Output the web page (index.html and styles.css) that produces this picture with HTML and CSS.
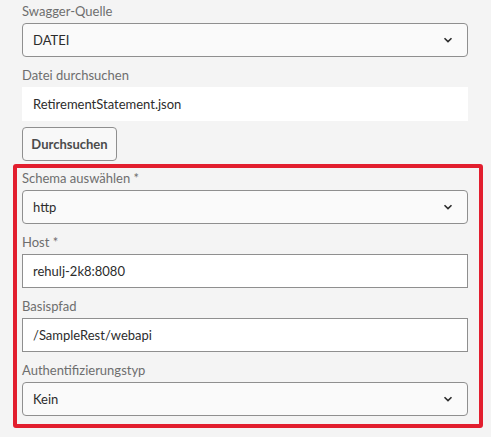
FILE: index.html
```html
<!DOCTYPE html>
<html lang="de">
<head>
<meta charset="utf-8">
<link rel="stylesheet" href="styles.css">
</head>
<body>
<div class="form">
  <div class="field first">
    <div class="label">Swagger-Quelle</div>
    <div class="select"><span>DATEI</span><svg class="chev" width="10" height="6" viewBox="0 0 10 6"><path d="M1.5 1.2 L5 4.6 L8.5 1.2" fill="none" stroke="#2c2c2c" stroke-width="1.6"/></svg></div>
  </div>
  <div class="field">
    <div class="label">Datei durchsuchen</div>
    <div class="file">RetirementStatement.json</div>
  </div>
  <div class="btnrow"><button class="btn">Durchsuchen</button></div>
  <div class="highlight">
    <div class="field first">
      <div class="label">Schema auswählen *</div>
      <div class="select"><span>http</span><svg class="chev" width="10" height="6" viewBox="0 0 10 6"><path d="M1.5 1.2 L5 4.6 L8.5 1.2" fill="none" stroke="#2c2c2c" stroke-width="1.6"/></svg></div>
    </div>
    <div class="field">
      <div class="label">Host *</div>
      <div class="input">rehulj-2k8:8080</div>
    </div>
    <div class="field">
      <div class="label">Basispfad</div>
      <div class="input">/SampleRest/webapi</div>
    </div>
    <div class="field">
      <div class="label">Authentifizierungstyp</div>
      <div class="select"><span>Kein</span><svg class="chev" width="10" height="6" viewBox="0 0 10 6"><path d="M1.5 1.2 L5 4.6 L8.5 1.2" fill="none" stroke="#2c2c2c" stroke-width="1.6"/></svg></div>
    </div>
  </div>
</div>
</body>
</html>
```
FILE: styles.css
```css
html, body {
  margin: 0;
  padding: 0;
  background: #f4f4f4;
}
body {
  font-family: "Lato", "Open Sans", sans-serif;
  font-size: 13px;
  color: #2c2c2c;
  width: 491px;
  height: 437px;
  overflow: hidden;
}
.form {
  padding: 0 0 0 22px;
  width: 446px;
}
.field {
  display: flex;
  flex-direction: column;
}
.label {
  color: #6e6e6e;
  font-size: 13px;
  line-height: 16px;
  height: 16px;
  margin-top: 10px;
  margin-bottom: 4px;
}
.form > .field.first .label {
  margin-top: 3px;
}
.highlight .field.first .label {
  margin-top: 0;
}
.select {
  box-sizing: border-box;
  height: 34px;
  border: 1px solid #8f8f8f;
  border-radius: 4px;
  background: #fafafa;
  display: flex;
  align-items: center;
  justify-content: space-between;
  padding: 0 14px 0 10px;
}
.chev {
  display: block;
}
.file {
  box-sizing: border-box;
  height: 34px;
  background: #ffffff;
  display: flex;
  align-items: center;
  padding: 0 11px;
}
.input {
  box-sizing: border-box;
  height: 34px;
  border: 1px solid #8f8f8f;
  background: #ffffff;
  display: flex;
  align-items: center;
  padding: 0 10px;
}
.btnrow {
  padding-top: 6px;
  display: flex;
}
.btn {
  box-sizing: border-box;
  height: 34px;
  width: 95px;
  border: 1px solid #8f8f8f;
  border-radius: 4px;
  background: #f8f8f8;
  font-family: inherit;
  font-size: 13px;
  font-weight: bold;
  color: #4b4b4b;
  padding: 0;
}
.highlight {
  margin: 3px 0 0 -9px;
  width: 470px;
  box-sizing: border-box;
  border: 4px solid #e21e2e;
  border-radius: 3px;
  padding: 2px 11px 8px 5px;
}
```
